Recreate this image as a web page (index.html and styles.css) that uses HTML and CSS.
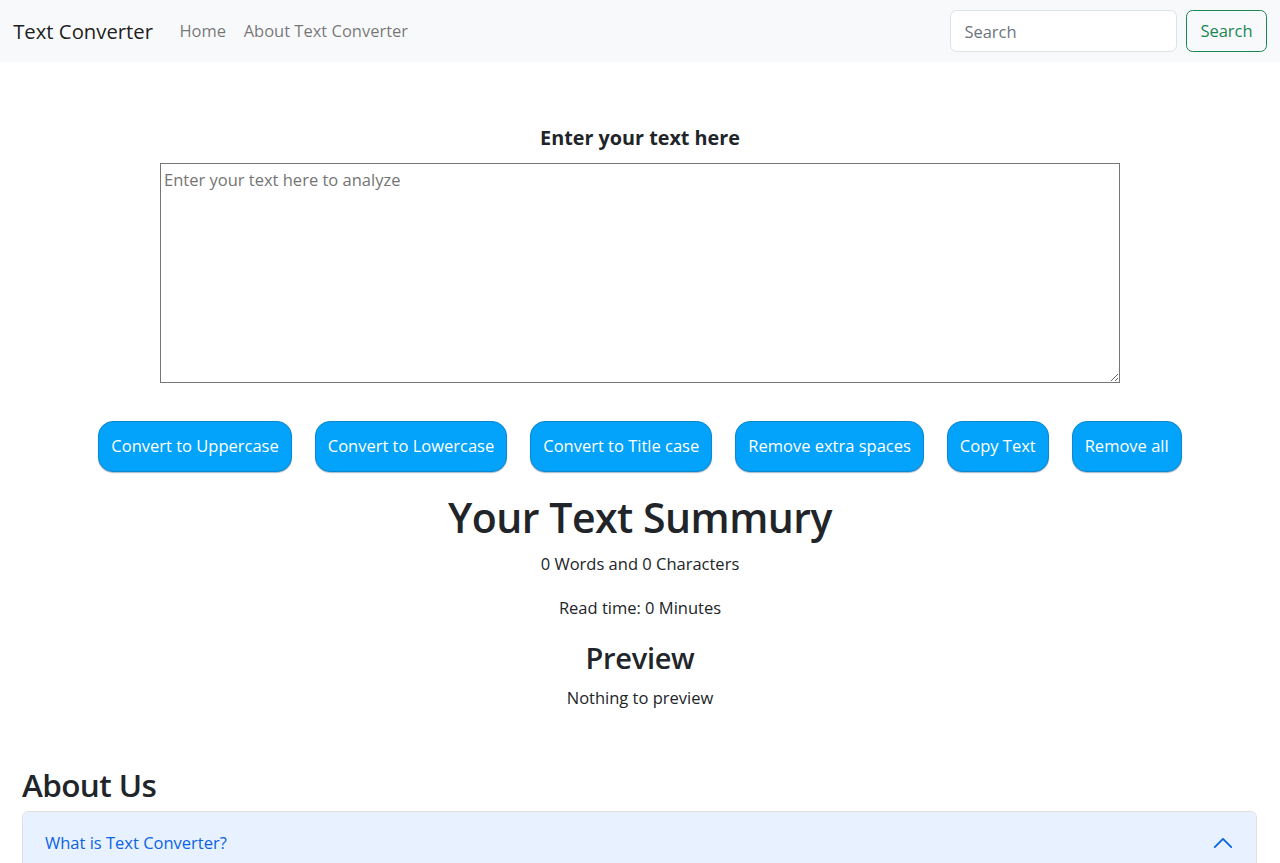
FILE: index.html
```html
<!DOCTYPE html>
<html lang="en">
<head>
<meta charset="utf-8">
<title>Text Converter</title>
<link rel="stylesheet" href="styles.css">
</head>
<body>
<nav class="navbar">
  <div class="nav-left">
    <a class="brand" href="#">Text Converter</a>
    <ul class="nav-links">
      <li><a href="#">Home</a></li>
      <li><a href="#">About Text Converter</a></li>
    </ul>
  </div>
  <form class="search">
    <input class="search-input" type="search" placeholder="Search">
    <button class="search-btn" type="button">Search</button>
  </form>
</nav>

<main class="main">
  <h5 class="label">Enter your text here</h5>
  <textarea class="text-box" placeholder="Enter your text here to analyze"></textarea>
  <div class="btn-row">
    <button class="action-btn" type="button">Convert to Uppercase</button>
    <button class="action-btn" type="button">Convert to Lowercase</button>
    <button class="action-btn" type="button">Convert to Title case</button>
    <button class="action-btn" type="button">Remove extra spaces</button>
    <button class="action-btn" type="button">Copy Text</button>
    <button class="action-btn" type="button">Remove all</button>
  </div>
  <h1 class="summary-title">Your Text Summury</h1>
  <p class="stat">0 Words and 0 Characters</p>
  <p class="stat">Read time: 0 Minutes</p>
  <h3 class="preview-title">Preview</h3>
  <p class="stat">Nothing to preview</p>
</main>

<section class="about">
  <h2 class="about-title">About Us</h2>
  <div class="accordion">
    <button class="acc-btn" type="button">
      <span>What is Text Converter?</span>
      <svg class="chevron" viewBox="0 0 16 16" width="22" height="22" aria-hidden="true">
        <path d="M2 11L8 5L14 11" fill="none" stroke="#0c63e4" stroke-width="1.3" stroke-linecap="round" stroke-linejoin="round"/>
      </svg>
    </button>
  </div>
</section>
</body>
</html>
```

FILE: styles.css
```css
* { box-sizing: border-box; }

body {
  margin: 0;
  font-family: "Open Sans", "Noto Sans", sans-serif;
  font-size: 16.5px;
  line-height: 26.4px;
  color: #212529;
  background: #fff;
}

a { text-decoration: none; }

.navbar {
  height: 62px;
  background: #f8f9fa;
  display: flex;
  align-items: center;
  justify-content: space-between;
  padding: 0 13.2px;
}

.nav-left {
  display: flex;
  align-items: center;
}

.brand {
  font-size: 20.3px;
  line-height: 33px;
  color: rgba(0, 0, 0, 0.9);
  margin-right: 17.6px;
}

.nav-links {
  list-style: none;
  margin: 0;
  padding: 0;
  display: flex;
}

.nav-links a {
  display: block;
  padding: 8.8px;
  color: rgba(0, 0, 0, 0.55);
}

.search {
  display: flex;
  align-items: center;
  margin: 0;
}

.search-input {
  width: 227px;
  height: 42px;
  margin-right: 9px;
  padding: 6.6px 13.2px;
  border: 1.1px solid #dee2e6;
  border-radius: 6.6px;
  font: inherit;
  color: #212529;
  background: #fff;
}

.search-input::placeholder { color: #6c757d; }

.search-btn {
  height: 42px;
  padding: 6.6px 13.2px;
  border: 1.1px solid #198754;
  border-radius: 6.6px;
  background: transparent;
  color: #198754;
  font: inherit;
}

.main {
  padding-top: 63px;
  text-align: center;
}

.label {
  margin: 0 0 11.6px;
  font-size: 19.8px;
  font-weight: 700;
  line-height: 26.4px;
}

.text-box {
  display: block;
  width: 960px;
  height: 220px;
  margin: 0 auto;
  padding: 2px 3px;
  border: 1px solid #767676;
  font-family: inherit;
  font-size: 16.5px;
  line-height: 28px;
  color: #212529;
}

.text-box::placeholder { color: #757575; }

.btn-row {
  display: flex;
  justify-content: center;
  gap: 23px;
  margin-top: 38px;
}

.action-btn {
  height: 51px;
  padding: 0 12px;
  background: #03a2fb;
  color: #fff;
  border: 1px solid #0c86cc;
  border-radius: 15px;
  box-shadow: 0 1px 1px rgba(0, 60, 110, 0.35);
  font-family: inherit;
  font-size: 16.5px;
  line-height: 26.4px;
}

.summary-title {
  margin: 19px 0 7px;
  font-size: 41px;
  font-weight: 600;
  letter-spacing: -0.5px;
  line-height: 52.8px;
}

.stat {
  margin: 0 0 17.6px;
}

.preview-title {
  margin: 0 0 8.8px;
  font-size: 29px;
  font-weight: 600;
  letter-spacing: -0.3px;
  line-height: 37px;
}

.about {
  margin-top: 53px;
  padding: 0 23px 0 22px;
}

.about-title {
  margin: 0 0 5px;
  font-size: 31.5px;
  font-weight: 600;
  letter-spacing: -0.6px;
  line-height: 42.2px;
}

.accordion {
  border: 1px solid rgba(0, 0, 0, 0.125);
  border-bottom: 0;
  border-radius: 6.6px 6.6px 0 0;
  overflow: hidden;
}

.acc-btn {
  width: 100%;
  display: flex;
  align-items: center;
  justify-content: space-between;
  padding: 17.6px 22px;
  background: #e7f1ff;
  color: #0c63e4;
  border: 0;
  box-shadow: inset 0 -1px 0 rgba(0, 0, 0, 0.125);
  font-family: inherit;
  font-size: 16.5px;
  line-height: 26.4px;
  text-align: left;
}

.chevron { flex-shrink: 0; }
```
